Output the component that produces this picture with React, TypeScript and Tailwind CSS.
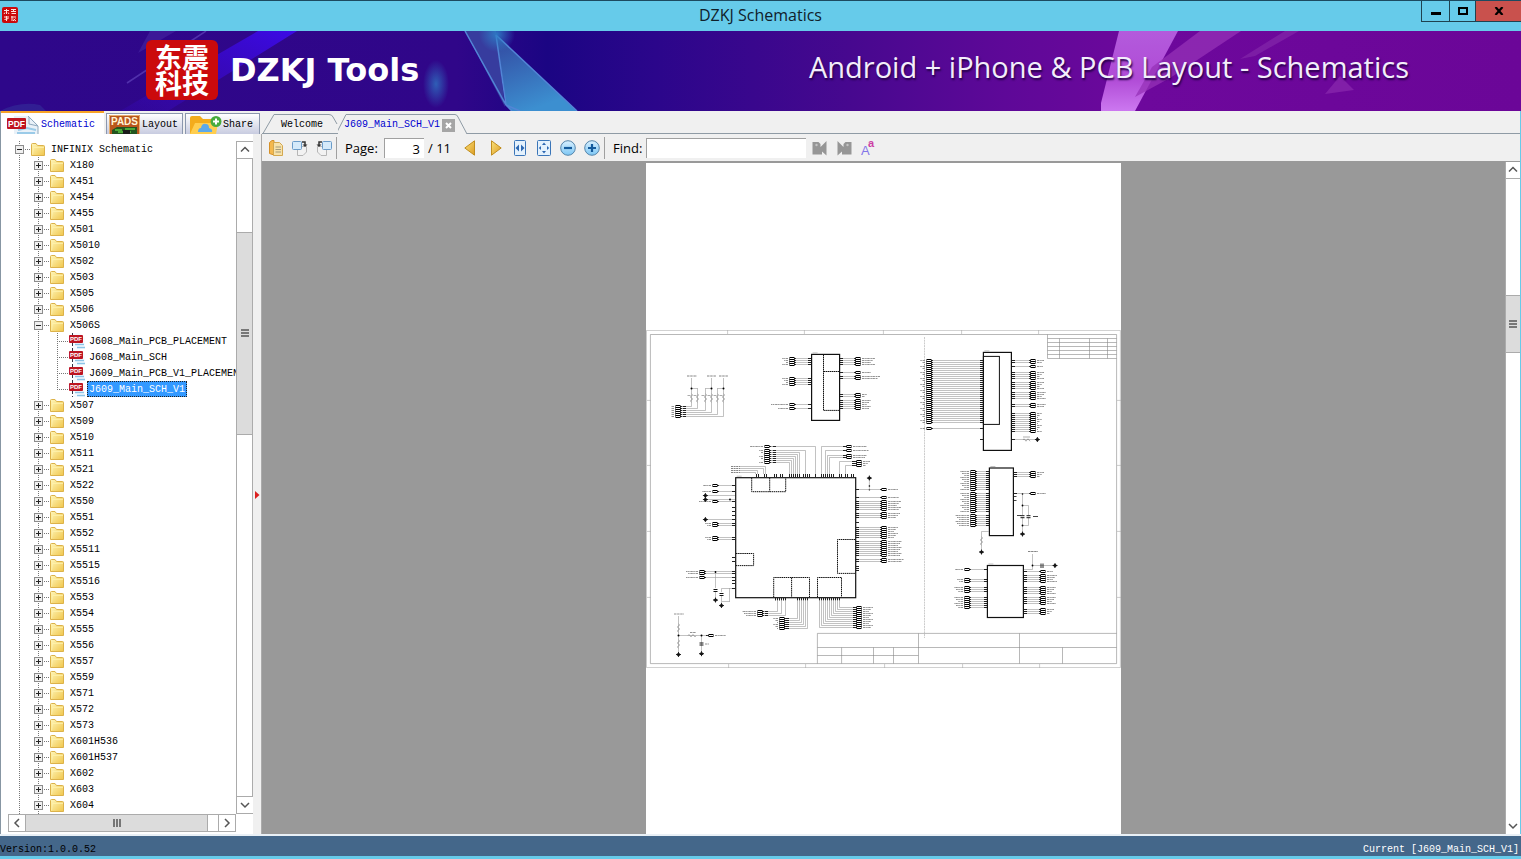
import type { ReactNode } from "react";

type TreeItem = {
  label: string;
  level: 0 | 1 | 2;
  open?: boolean;
  last?: boolean;
  selected?: boolean;
};

const folder = (label: string): TreeItem => ({ label, level: 1 });

const dataTree: TreeItem[] = [
  { label: "INFINIX Schematic", level: 0, open: true },
  ...["X180", "X451", "X454", "X455", "X501", "X5010", "X502", "X503", "X505", "X506"].map(folder),
  { label: "X506S", level: 1, open: true },
  { label: "J608_Main_PCB_PLACEMENT", level: 2 },
  { label: "J608_Main_SCH", level: 2 },
  { label: "J609_Main_PCB_V1_PLACEMENT", level: 2 },
  { label: "J609_Main_SCH_V1", level: 2, selected: true, last: true },
  ...[
    "X507", "X509", "X510", "X511", "X521", "X522", "X550", "X551", "X552",
    "X5511", "X5515", "X5516", "X553", "X554", "X555", "X556", "X557", "X559",
    "X571", "X572", "X573", "X601H536", "X601H537", "X602", "X603", "X604", "X605",
  ].map(folder),
];

/* ---------- icons ---------- */

const IconFolder = () => (
  <svg width="14" height="13" viewBox="0 0 14 13">
    <defs>
      <linearGradient id="folder" x1="0" y1="0" x2="1" y2="1">
        <stop offset="0" stopColor="#fff7bb" />
        <stop offset="1" stopColor="#f0c64c" />
      </linearGradient>
    </defs>
    <path d="M.5 1.5Q.5.5 1.5.5H5L6.5 2.5H12.5Q13.5 2.5 13.5 3.5V12.5H.5Z" fill="url(#folder)" stroke="#dcb24a" />
    <path d="M1.5 11.5L2.5 4.5H13" fill="none" stroke="#fff3b0" opacity=".7" />
  </svg>
);

const IconPdfSmall = () => (
  <svg width="17" height="16" viewBox="0 0 17 16">
    <path d="M4 0H11L16 5V16H4Z" fill="#f7fbff" />
    <path d="M3.5 0V16" stroke="#334" strokeDasharray="3 2" />
    <path d="M6 11.5H15M8 14.5H16" stroke="#8cc4e6" strokeWidth="1.5" />
    <rect x="0" y="2" width="14" height="8" rx="1" fill="#bd1522" />
    <text x="7" y="8" fontSize="6" fontWeight="700" textAnchor="middle" fill="#fff" fontFamily="Liberation Sans, sans-serif">PDF</text>
  </svg>
);

const IconPdf = () => (
  <svg width="32" height="20" viewBox="0 0 32 20">
    <path d="M7 1H22L31 10V20H7Z" fill="#e9f1f8" />
    <path d="M21 1L31 11V20M22 2V9L31 11" fill="none" stroke="#8fa9be" />
    <path d="M11 15L20 13L29 15M10 18H28" stroke="#9bcbe8" strokeWidth="2" fill="none" />
    <rect x="0" y="3" width="19" height="11" rx="1" fill="#c01420" />
    <text x="9.5" y="12" fontSize="8.5" fontWeight="700" textAnchor="middle" fill="#fff" fontFamily="Liberation Sans, sans-serif">PDF</text>
  </svg>
);

const IconPads = () => (
  <svg width="31" height="19" viewBox="0 0 31 19">
    <rect width="31" height="19" fill="#b9561c" />
    <path d="M.5 19V.5H30.5V19" fill="none" stroke="#e6b070" />
    <text x="15.5" y="10" fontSize="10" fontWeight="700" textAnchor="middle" fill="#fff4d6" fontFamily="Liberation Sans, sans-serif">PADS</text>
    <path d="M3 19V15L8 12H28V19Z" fill="#23551f" />
    <path d="M6 15H13M16 14H26M9 17H22" stroke="#59c540" strokeWidth="1.5" />
    <rect x="14" y="15" width="7" height="4" fill="#1a1a1a" />
  </svg>
);

const IconShare = () => (
  <svg width="32" height="19" viewBox="0 0 32 19">
    <path d="M0 3Q0 1 2 1H10L13 4H22Q24 4 24 6V19H0Z" fill="#f3ac1c" />
    <path d="M0 19L5 8H28L26 19Z" fill="#ffce4f" />
    <path d="M8 17Q8 13 11 13Q12 8 16 9Q19 9 19 13Q23 14 22 17Z" fill="#5da9ea" />
    <circle cx="26" cy="6.500" r="5.500" fill="#47ab3d" />
    <path d="M26 3.500V9.500M23 6.500H29" stroke="#fff" strokeWidth="2" />
  </svg>
);

const IconCopy = () => (
  <svg width="16" height="16" viewBox="0 0 16 16">
    <path d="M1.500 2.500L4 .5H6V15L1.500 13.500Z" fill="#f5b94e" stroke="#d59028" />
    <path d="M5.500 2.500H11.500L14.500 5.500V15.500H5.500Z" fill="#f7e2aa" stroke="#d3a850" />
    <path d="M7.500 7H13M7.500 9.500H13M7.500 12H13" stroke="#a39a7a" />
  </svg>
);

const IconRotate = ({ left }: { left?: boolean }) => (
  <svg width="18" height="16" viewBox="0 0 18 16">
    <g transform={left ? "translate(18 0) scale(-1 1)" : undefined}>
      <path d="M6.500 6.500H15.500V12L12 15.500H6.500Z" fill="#f2f2f2" stroke="#b6b6b6" />
      <rect x="1.500" y="1.500" width="9" height="8" rx="1" fill="#d5eafa" stroke="#6b9cc9" />
      <path d="M11 2H14V5" fill="none" stroke="#333" strokeWidth="1.500" />
      <path d="M11.500 4.500H16.500L14 7Z" fill="#333" />
    </g>
  </svg>
);

const IconTriangle = ({ left }: { left?: boolean }) => (
  <svg width="12" height="16" viewBox="0 0 12 16">
    <defs>
      <linearGradient id="gold" x1="0" y1="0" x2="1" y2="1">
        <stop offset="0" stopColor="#fbe27a" />
        <stop offset="1" stopColor="#dc9c24" />
      </linearGradient>
    </defs>
    <path d={left ? "M10.500 .8V15.200L.8 8Z" : "M1.500 .8V15.200L11.200 8Z"} fill="url(#gold)" stroke="#c08e20" />
  </svg>
);

const IconFit = ({ page }: { page?: boolean }) => (
  <svg width="14" height="16" viewBox="0 0 14 16">
    <rect x={page ? 0.5 : 1.5} y=".5" width={page ? 13 : 11} height="15" rx="1" fill="#e4f1fc" stroke="#3a75b8" />
    {page ? (
      <path d="M7 2.500L9 5H5ZM7 13.500L9 11H5ZM1.800 8L4 6V10ZM12.200 8L10 6V10Z" fill="#2d68b2" />
    ) : (
      <path d="M2.500 8L6 4.500V11.500ZM11.500 8L8 4.500V11.500Z" fill="#2d68b2" />
    )}
  </svg>
);

const IconZoom = ({ plus }: { plus?: boolean }) => (
  <svg width="16" height="16" viewBox="0 0 16 16">
    <defs>
      <linearGradient id="glass" x1="0" y1="0" x2="0" y2="1">
        <stop offset="0" stopColor="#d9f0ff" />
        <stop offset="1" stopColor="#7cc6f4" />
      </linearGradient>
    </defs>
    <circle cx="8" cy="8" r="7.300" fill="url(#glass)" stroke="#5686ab" />
    <path d={plus ? "M4 8H12M8 4V12" : "M4 8H12"} stroke="#145a9c" strokeWidth="2.200" />
  </svg>
);

const IconFind = ({ next }: { next?: boolean }) => (
  <svg width="16" height="16" viewBox="0 0 16 16">
    <path
      d="M.5 2H6.500L8.500 4V7L14.500 1V15.500L10 11.500V14.500H.5Z"
      fill="#969696"
      transform={next ? "translate(16 0) scale(-1 1)" : undefined}
    />
    <circle cx={next ? 11.5 : 4.5} cy="5" r="1.200" fill="#c4c4c4" />
  </svg>
);

const IconCase = () => (
  <svg width="14" height="16" viewBox="0 0 14 16">
    <text x="0" y="15" fontSize="13" fill="#8375e8" fontFamily="Liberation Sans, sans-serif">A</text>
    <text x="7" y="7" fontSize="11" fontWeight="700" fill="#cc3fa4" fontFamily="Liberation Sans, sans-serif">a</text>
  </svg>
);

/* ---------- window header ---------- */

const LogoMark = () => (
  <div className="flex h-[60px] w-[72px] flex-col items-center justify-center rounded-md bg-[#cb0a0c] font-['Noto_Sans_CJK_SC',sans-serif] text-[27px] leading-[26px] font-bold text-white">
    <span>东震</span>
    <span>科技</span>
  </div>
);

const IconApp = () => (
  <svg width="16" height="16" viewBox="0 0 16 16">
    <rect width="16" height="16" rx="2" fill="#cb0a0c" />
    <path
      d="M2 3.500H7M4.500 2V7M3 5.500L2 7M6 5.500L7 7M9 2.500H14M11.500 2V5M9 4.500H14M9.500 6.500H14M2 10H7M4.500 9V14M2.500 12.500L6.500 11.500M9 10H14M10 9V14M11.500 12L14 14M13.500 11.500L11 14"
      fill="none"
      stroke="#ffe3dc"
    />
  </svg>
);

const TitleBar = () => (
  <header className="relative flex h-[31px] shrink-0 items-start justify-between border-t border-[#1c4a60] bg-[#66cbea]">
    <div className="flex h-7 items-center pl-0.5">
      <IconApp />
    </div>
    <h1 className="absolute inset-x-0 text-center font-['Open_Sans',sans-serif] text-[16px] leading-7 text-[#10202a]">
      DZKJ Schematics
    </h1>
    <div className="relative flex h-[21px] border-b border-l border-[#1f4250]">
      <button aria-label="Minimize" className="flex w-7 items-center justify-center border-r border-[#1f4250]">
        <span className="mt-1 h-[3px] w-2.5 bg-black" />
      </button>
      <button aria-label="Maximize" className="flex w-[26px] items-center justify-center border-r border-[#1f4250]">
        <span className="h-2 w-2.5 border-2 border-black" />
      </button>
      <button aria-label="Close" className="flex w-[45px] items-center justify-center bg-[#c9514d]">
        <svg width="10" height="8" viewBox="0 0 10 8">
          <path d="M1.500 0L8.500 8M8.500 0L1.500 8" stroke="#000" strokeWidth="2.200" />
        </svg>
      </button>
    </div>
  </header>
);

const BannerArt = () => (
  <svg className="absolute inset-0 h-full w-full" viewBox="0 0 1521 80" preserveAspectRatio="none">
    <defs>
      <linearGradient id="sky">
        <stop offset="0" stopColor="#2e078a" />
        <stop offset=".3" stopColor="#300689" />
        <stop offset=".36" stopColor="#1b0583" />
        <stop offset=".43" stopColor="#2b068b" />
        <stop offset=".56" stopColor="#47088f" />
        <stop offset=".66" stopColor="#5e0898" />
        <stop offset=".75" stopColor="#6d089c" />
        <stop offset="1" stopColor="#6b0698" />
      </linearGradient>
      <linearGradient id="crystal" x1="0" y1="0" x2=".4" y2="1">
        <stop offset="0" stopColor="#32469f" />
        <stop offset="1" stopColor="#3c8fd0" />
      </linearGradient>
      <linearGradient id="ray" x1="1" y1="0" x2="0" y2="1">
        <stop offset="0" stopColor="#3c0ae6" />
        <stop offset="1" stopColor="#3a09c8" stopOpacity=".2" />
      </linearGradient>
      <linearGradient id="pink" x1="0" y1="0" x2="0" y2="1">
        <stop offset="0" stopColor="#b35bdc" />
        <stop offset=".6" stopColor="#b04bd6" />
        <stop offset="1" stopColor="#cc78f0" />
      </linearGradient>
      <radialGradient id="glow">
        <stop offset="0" stopColor="#2e80c8" stopOpacity=".9" />
        <stop offset="1" stopColor="#2e80c8" stopOpacity="0" />
      </radialGradient>
    </defs>
    <rect width="1521" height="80" fill="url(#sky)" />
    <path d="M258 0H297L168 80H120Z" fill="url(#ray)" />
    <path d="M150 0H176L138 22Z" fill="#4a2ba6" opacity=".5" />
    <path d="M206 0L127 52" stroke="#5a3bb5" strokeWidth="1.500" opacity=".8" />
    <path d="M0 80Q20 70 40 74L46 80Z" fill="#37409f" opacity=".4" />
    <ellipse cx="436" cy="53" rx="13" ry="24" fill="url(#glow)" opacity=".8" />
    <path d="M465 0H496L505 76Z" fill="#373c9e" />
    <path d="M496 4L577 80H511L506 74Z" fill="url(#crystal)" />
    <path d="M465 0L506 74L512 80M496 4L506 74M496 4L577 80M506 74L520 80" stroke="#5285d6" strokeWidth="1.500" fill="none" />
    <circle cx="497" cy="3" r="18" fill="url(#glow)" />
    <path d="M1119 0H1178L1135 80H1101V72Z" fill="url(#pink)" />
    <path d="M1200 0H1241L1170 47L1135 66L1152 36Z" fill="#9632b7" opacity=".75" />
    <path d="M1285 0H1299L1255 25L1240 28Z" fill="#8327aa" opacity=".7" />
    <path d="M1340 45L1354 59L1325 63Z" fill="#8a2aae" opacity=".7" />
  </svg>
);

const Banner = () => (
  <div className="relative flex h-20 shrink-0 items-center justify-between overflow-hidden pr-28 pb-0.5 pl-[146px] text-white">
    <BannerArt />
    <div className="relative flex items-center gap-3">
      <LogoMark />
      <strong className="font-['DejaVu_Sans',sans-serif] text-[32px] leading-10 font-bold">DZKJ Tools</strong>
    </div>
    <p className="relative pb-1.5 font-['Open_Sans',sans-serif] text-[29px] leading-8 text-[#f3eefb] [text-shadow:1px_2px_2px_#26004a]">
      Android + iPhone &amp; PCB Layout - Schematics
    </p>
  </div>
);

/* ---------- scroll bars ---------- */

type Direction = "up" | "down" | "left" | "right";

const arrows: Record<Direction, string> = {
  up: "M1 6.500L5 2.500L9 6.500",
  down: "M1 3L5 7L9 3",
  left: "M7 1L3 5L7 9",
  right: "M3 1L7 5L3 9",
};

const ScrollButton = ({ to }: { to: Direction }) => (
  <button aria-label={`Scroll ${to}`} className="flex size-4 shrink-0 items-center justify-center bg-white">
    <svg width="10" height="10" viewBox="0 0 10 10">
      <path d={arrows[to]} fill="none" stroke="#555" strokeWidth="1.500" />
    </svg>
  </button>
);

const Grip = () => (
  <svg width="8" height="8" viewBox="0 0 8 8">
    <path d="M0 1H8M0 4H8M0 7H8" stroke="#555" strokeWidth="1.500" />
  </svg>
);

/* ---------- left pane ---------- */

const Guide = ({ item, cell }: { item: TreeItem; cell: number }) => {
  const own = cell === item.level;
  const endsHere = own && item.last;
  return (
    <svg className="shrink-0 overflow-visible" width="19" height="16" viewBox="0 0 19 16">
      <path d={endsHere ? "M9.500 0V8" : "M9.500 0V16"} stroke="#777" strokeDasharray="1 1" />
      {own && <path d="M9 8.500H20" stroke="#777" strokeDasharray="1 1" />}
      {own && cell < 2 && (
        <>
          <rect x="5.500" y="4.500" width="8" height="8" fill="#f0f0f0" stroke="#8c8c8c" />
          <path d={item.open ? "M7 8.500H12" : "M7 8.500H12M9.500 6V11"} stroke="#222" />
        </>
      )}
    </svg>
  );
};

const TreeRow = ({ item }: { item: TreeItem }) => (
  <li role="treeitem" aria-selected={!!item.selected} className="flex h-4 items-center pl-[9px] whitespace-nowrap">
    {Array.from({ length: item.level + 1 }, (_, cell) => (
      <Guide key={cell} item={item} cell={cell} />
    ))}
    <span className="flex w-5 shrink-0 pl-0.5">{item.level === 2 ? <IconPdfSmall /> : <IconFolder />}</span>
    <button
      className={
        item.selected
          ? "h-4 bg-[#3399ff] px-0.5 pt-0.5 leading-[14px] text-white outline-1 -outline-offset-1 outline-dotted outline-[#222]"
          : "h-4 px-0.5 pt-0.5 leading-[14px]"
      }
    >
      {item.label}
    </button>
  </li>
);

const Sidebar = () => (
  <aside className="flex w-[262px] shrink-0 flex-col border-l border-[#8796a3] bg-[#f0f0f0]">
    <div role="tablist" className="flex h-[23px] items-end gap-0.5 text-[10px]">
      <button role="tab" aria-selected className="flex h-full w-[103px] items-center gap-0.5 border-t-2 border-[#f8a326] bg-white pt-0.5 pl-1.5 text-[#0000d0]">
        <IconPdf />
        Schematic
      </button>
      <button role="tab" aria-selected={false} className="flex h-[21px] w-[77px] items-end gap-0.5 border border-b-0 border-[#8b97ad] bg-linear-to-b from-white to-[#c8cce0] pl-0.5">
        <IconPads />
        <span className="leading-[18px]">Layout</span>
      </button>
      <button role="tab" aria-selected={false} className="flex h-[21px] w-[75px] items-end gap-px border border-b-0 border-[#8b97ad] bg-linear-to-b from-white to-[#c8cce0] pl-1">
        <IconShare />
        <span className="leading-[18px]">Share</span>
      </button>
    </div>
    <div className="flex min-h-0 flex-1">
      <div className="flex min-w-0 flex-1 flex-col bg-white pt-[7px] pb-0.5">
        <div className="flex min-h-0 flex-1">
          <ul role="tree" className="min-w-0 flex-1 overflow-hidden text-[10px]">
            {dataTree.map((item) => (
              <TreeRow key={item.label} item={item} />
            ))}
          </ul>
          <div className="flex w-[17px] shrink-0 flex-col border border-[#ababab] bg-white">
            <ScrollButton to="up" />
            <div className="flex-[73] border-t border-[#ababab]" />
            <div className="flex flex-[203] items-center justify-center border-y border-[#ababab] bg-[#dcdcdc]">
              <Grip />
            </div>
            <div className="flex-[363] border-b border-[#ababab]" />
            <ScrollButton to="down" />
          </div>
        </div>
        <div className="mr-[17px] ml-[7px] flex h-[18px] shrink-0 border border-[#ababab]">
          <ScrollButton to="left" />
          <div className="flex flex-[185] items-center justify-center border-x border-[#ababab] bg-[#dcdcdc]">
            <span className="rotate-90">
              <Grip />
            </span>
          </div>
          <div className="flex-[10] border-r border-[#ababab]" />
          <ScrollButton to="right" />
        </div>
      </div>
      <div className="flex w-[9px] shrink-0 flex-col border-r border-[#ababab] pl-px">
        <span className="flex-[360]" />
        <svg width="6" height="8" viewBox="0 0 6 8">
          <path d="M1 0L5.500 4L1 8Z" fill="#dc2020" />
        </svg>
        <span className="flex-[337]" />
      </div>
    </div>
  </aside>
);

/* ---------- schematic drawing ---------- */

type BusProps = {
  from: number;
  port: number;
  y: number;
  n?: number;
  text?: number;
};

// n parallel wires from a chip edge to a column of ports with net names behind
const Bus = ({ from, port, y, n = 1, text = 12 }: BusProps) => {
  const side = port > from ? 1 : -1;
  const first = Math.floor(y) + 0.5;
  return (
    <g>
      {Array.from({ length: n }, (_, i) => {
        const top = first + i * 2;
        return (
          <g key={i}>
            <path d={`M${from} ${top}H${port}`} stroke="#999" strokeWidth=".6" />
            <path d={`M${from} ${top}h${side * 3}`} stroke="#222" strokeWidth="1" />
            <path d={`M${port - side * 4} ${top}h${side * 2}`} stroke="#333" strokeWidth="1" />
            <rect x={port - 2} y={top - 1} width="4" height="2" fill="#fff" stroke="#000" strokeWidth="1" />
            <path
              d={`M${port + side * 4} ${top}h${side * (text - (i % 3) * 2)}`}
              stroke="#777"
              strokeWidth=".8"
              strokeDasharray="2.500 .7 1.500 .5"
            />
          </g>
        );
      })}
    </g>
  );
};

const Chip = ({ x, y, w, h }: { x: number; y: number; w: number; h: number }) => (
  <>
    <rect x={x} y={y} width={w} height={h} fill="none" stroke="#111" strokeWidth="1.200" />
    <path d={`M${x + 1} ${y - 1.5}h5`} stroke="#999" strokeWidth=".6" />
  </>
);

const Ground = ({ x, y }: { x: number; y: number }) => (
  <path d={`M${x} ${y - 1.5}l1.800 1.500l-1.800 1.800l-1.800 -1.800ZM${x} ${y - 2.5}v5M${x - 2.5} ${y}h5`} fill="#111" stroke="#111" strokeWidth=".8" />
);

const Cap = ({ x, y }: { x: number; y: number }) => (
  <path d={`M${x - 2} ${y - 1}h4M${x - 2} ${y + 1}h4`} stroke="#111" strokeWidth="1" />
);

const Resistor = ({ x, y }: { x: number; y: number }) => (
  <path d={`M${x} ${y - 4}l1.200 1l-2.400 2l2.400 2l-2.400 2l1.200 1`} fill="none" stroke="#777" strokeWidth=".6" />
);

const Pins = ({ xs, y }: { xs: number[]; y: number }) => (
  <path d={xs.map((x) => `M${x + 0.5} ${y}v3`).join("")} stroke="#222" strokeWidth="1" />
);

const Wires = ({ d }: { d: string }) => <path d={d} fill="none" stroke="#999" strokeWidth=".6" />;

const steps = (start: number, n: number, step = 2) => Array.from({ length: n }, (_, i) => start + i * step);

const SheetFrame = () => (
  <g fill="none" stroke="#aaa" strokeWidth=".6">
    <path d="M646.500 330.400H1120.400V667.600H646.500Z" />
    <path d="M650.400 334.500H1116.600V663.600H650.400Z" stroke="#888" />
    <path d="M727.600 330v4M804.400 330v4M883.400 330v4M961.600 330v4M1038.600 330v4" />
    <path d="M728.600 664v4M805.600 664v4M884.600 664v4M962.600 664v4M1039.600 664v4" />
    <path d="M647 400.400h4M647 465.400h4M647 531.400h4M647 597.400h4" />
    <path d="M1117 400.400h4M1117 465.400h4M1117 531.400h4M1117 597.400h4" />
    <path d="M817.400 663.600V633.400H1116.600M817.400 647.500H1116.600M817.400 655.500H918.400" stroke="#888" />
    <path d="M841.600 647.500V663.600M873.500 647.500V663.600M893.500 647.500V663.600M918.500 633.400V663.600M1019.500 633.400V663.600M1062.500 647.500V663.600" stroke="#888" />
    <path d="M1047.500 334.500V358.500H1116.600M1047.500 338.500H1116.600M1047.500 342.500H1116.600M1047.500 346.500H1116.600M1047.500 350.500H1116.600M1047.500 354.500H1116.600" stroke="#888" />
    <path d="M1059.500 338.500V358.500M1089.500 338.500V358.500M1107.500 338.500V358.500" stroke="#888" />
    <path d="M924.500 337V638" strokeDasharray="2 .7" />
  </g>
);

const PullUps = () => {
  const xs = [691.5, 697.5, 705.5, 711.5, 717.5, 723.5];
  return (
    <g>
      <path d="M687 376h10M707 376h9M719 376h9" stroke="#777" strokeWidth=".9" strokeDasharray="2.500 .7" />
      <Wires d="M691.500 378V388.500H697.500M711.500 378V388.500H705.500M723.500 378V388.500H717.500" />
      <Wires d={xs.map((x, i) => `M${x} 388V${406.5 + i * 2}H680`).join("")} />
      {xs.map((x, i) => (
        <g key={x}>
          <Resistor x={x} y={398} />
          <path d={`M${x - 4} 395.500h3`} stroke="#888" strokeWidth=".7" />
          <Bus from={686} port={678} y={406 + i * 2} text={3} />
        </g>
      ))}
      <circle cx="691.500" cy="388.500" r="1" />
      <circle cx="711.500" cy="388.500" r="1" />
      <circle cx="723.500" cy="388.500" r="1" />
    </g>
  );
};

const MainChip = () => (
  <g>
    <Chip x={735.7} y={477.7} w={120} h={120} />
    <g fill="none" stroke="#111" strokeWidth="1" strokeDasharray="1.500 .6">
      <path d="M751.700 478V491.700H785.700V478M769.700 478V491.700" />
      <path d="M855 539.500H837.500V573.400H855" />
      <path d="M736 553.500H753.600V565.600H736" />
      <path d="M773.700 597V577.500H809.500V597M791.600 577.500V597" />
      <path d="M817.500 597V577.500H841.500V597" />
    </g>

    <Pins y={474} xs={[756, 758, 764, 766, 774, 776, 780, 782, ...steps(789, 6), ...steps(803, 4), 815, ...steps(821, 7), 839, 841, 845, 847, 851, 853]} />
    <Wires d="M770 446.500H815.500V474M740 466.500H765.500V474M740 468.500H763.500V474M740 470.500H757.500V474M740 472.500H755.500V474" />
    <Wires d={[805.5, 799.5, 797.5, 795.5, 793.5, 791.5, 789.5].map((x, i) => `M770 ${450.5 + i * 2}H${x}V474`).join("")} />
    <path d="M731 466.500h9M731 468.500h9M731 470.500h9M731 472.500h9" stroke="#777" strokeWidth=".9" strokeDasharray="2 .6" />
    <Bus from={776} port={767} y={446} text={13} />
    <Bus from={776} port={767} y={450} n={7} text={4} />
    <Wires d="M845 446.500H821.500V474M845 450.500H825.500V474M845 455.500H827.500V474M845 457.500H829.500V474M856 461.500H839.500V474M856 465.500H845.500V474" />
    <Bus from={843} port={849} y={446} text={14} />
    <Bus from={843} port={849} y={450} text={16} />
    <Bus from={843} port={849} y={455} n={2} text={14} />
    <Bus from={852} port={859} y={461} n={3} text={7} />

    <Wires d="M869.400 477V489.700" />
    <Ground x={869.4} y={478} />
    <circle cx="869.400" cy="486" r=".8" />
    <circle cx="869.400" cy="489.700" r=".8" />
    <Bus from={856} port={884} y={489} text={10} />
    <Bus from={856} port={884} y={497} text={11} />
    <Bus from={856} port={884} y={501} n={5} text={13} />
    <Bus from={856} port={884} y={513} n={3} text={12} />
    <Bus from={856} port={884} y={527} n={6} text={10} />
    <Bus from={856} port={884} y={541} n={8} text={14} />
    <Bus from={856} port={884} y={559} n={2} text={16} />
    <path d="M856 522.500h3M856 566.500h3M856 568.500h3M856 570.500h3" stroke="#222" />

    <Bus from={735} port={715} y={485} text={8} />
    <Bus from={735} port={715} y={491} text={9} />
    <Bus from={735} port={715} y={501} text={12} />
    <Bus from={735} port={715} y={523} n={2} text={6} />
    <Bus from={735} port={715} y={537} n={2} text={6} />
    <Bus from={735} port={702} y={571} n={2} text={12} />
    <Bus from={735} port={702} y={577} text={12} />
    <Wires d="M705 495.500H735M705 499.500H735M705 519.500H735M715.500 572V588M715.500 592V600M735 588.500H721.500V592M721.500 596V605M729.500 601.500H722M729.500 602V588" />
    <path d="M732 507.500h3M732 511.500h3M732 515.500h3M732 519.500h3M732 557.500h3M732 561.500h3M732 580.500h3M732 583.500h3M732 588.500h3" stroke="#222" />
    <Ground x={705.4} y={495.5} />
    <Ground x={705.4} y={499.5} />
    <Ground x={705.4} y={519.5} />
    <Cap x={715.5} y={590.5} />
    <Cap x={721.5} y={594.5} />
    <Ground x={715.5} y={600} />
    <Ground x={721.5} y={605.5} />
    <circle cx="730" cy="499.500" r=".9" />
    <circle cx="715.500" cy="572" r=".9" />

    <Pins y={597.5} xs={[...steps(775, 6), ...steps(797, 6), ...steps(819, 11)]} />
    <Wires d="M777.500 600V611.500H764M781.500 600V613.500H764M785.500 600V615.500H764" />
    <Wires d={steps(0, 6, 1).map((i) => `M${797.5 + i * 2} 600V${618.5 + i * 2}H786`).join("")} />
    <Wires d={steps(0, 11, 1).map((i) => `M${839.5 - i * 2} 600V${607.5 + i * 2}H857`).join("")} />
    <Bus from={768} port={760} y={611} n={3} text={14} />
    <Bus from={789} port={782} y={618} n={6} text={5} />
    <Bus from={853} port={859} y={607} n={11} text={10} />
  </g>
);

const Divider = () => (
  <g>
    <path d="M674 614h10M690 632.500h6M705 644h4" stroke="#777" strokeWidth=".8" strokeDasharray="2.500 .6" />
    <Wires d="M678.500 616V654M679 635.500H709M701.500 635.500V653" />
    <Resistor x={678.5} y={628} />
    <Resistor x={678.5} y={644} />
    <path d="M688 635.700l1 -1.200l2 2.400l2 -2.400l2 2.400l1 -1.200" fill="none" stroke="#777" strokeWidth=".6" />
    <Bus from={706} port={711} y={635} text={11} />
    <circle cx="678.500" cy="635.500" r="1" />
    <circle cx="701.500" cy="635.500" r="1" />
    <Cap x={701.5} y={644} />
    <Ground x={678.5} y={654.5} />
    <Ground x={701.5} y={653.7} />
  </g>
);

const Schematic = () => (
  <svg className="w-full" viewBox="646 330 475 338" role="img" aria-label="J609 main schematic, page 3">
    <SheetFrame />
    <PullUps />

    <Chip x={811.6} y={354.4} w={28} h={66} />
    <path d="M823.500 355V410.400H839M823.500 371.500H839" fill="none" stroke="#111" strokeDasharray="1.500 .5" />
    <Bus from={811} port={792} y={358} n={4} text={6} />
    <Bus from={811} port={792} y={378} n={4} text={6} />
    <Bus from={811} port={792} y={404} text={17} />
    <Bus from={811} port={792} y={408} text={10} />
    <Bus from={840} port={858} y={358} n={4} text={13} />
    <Bus from={840} port={858} y={372} text={9} />
    <Bus from={840} port={858} y={376} n={2} text={18} />
    <Bus from={840} port={858} y={394} n={2} text={5} />
    <Bus from={840} port={858} y={400} n={5} text={9} />

    <MainChip />
    <Divider />

    <Chip x={983.4} y={352.4} w={28} h={98} />
    <rect x="983.400" y="356.400" width="16" height="68" fill="none" stroke="#111" />
    <Bus from={983} port={929} y={360} n={32} text={5} />
    <Bus from={983} port={929} y={428} text={5} />
    <Bus from={1012} port={1033} y={360} n={2} text={7} />
    <Bus from={1012} port={1033} y={366} text={6} />
    <Bus from={1012} port={1033} y={372} n={4} text={7} />
    <Bus from={1012} port={1033} y={382} n={4} text={7} />
    <Bus from={1012} port={1033} y={392} n={4} text={9} />
    <Bus from={1012} port={1033} y={404} n={2} text={9} />
    <Bus from={1012} port={1033} y={413} n={10} text={5} />
    <Wires d="M1012 439.500H1037" />
    <path d="M980 439.500h3M1012 439.500h3" stroke="#222" />
    <path d="M1023 440l1 -1.200l2 2.400l2 -2.400l2 2.400M1023 437h7" fill="none" stroke="#777" strokeWidth=".6" />
    <Ground x={1037.4} y={439.5} />

    <Chip x={989.4} y={468} w={24} h={67.6} />
    <Bus from={989} port={973} y={471} n={10} text={9} />
    <Bus from={989} port={973} y={493} n={10} text={9} />
    <Bus from={989} port={973} y={515} n={6} text={14} />
    <Bus from={1014} port={1033} y={472} n={3} text={7} />
    <Bus from={1014} port={1033} y={493} text={9} />
    <Wires d="M1022.500 494V515M1022.500 505.500H1028.500V515M1022.500 518V534M1028.500 518V525.500H1023M989 531.500H981.500V552" />
    <path d="M1014 496.500h2.500M1014 500.500h2.500M1017 515.500h4M1033 516.500h5" stroke="#444" />
    <Cap x={1022.5} y={516.7} />
    <Cap x={1028.5} y={516.7} />
    <circle cx="1022.500" cy="505.500" r=".9" />
    <circle cx="1022.500" cy="494" r=".8" />
    <circle cx="1022.500" cy="525.500" r=".9" />
    <Ground x={1022.5} y={534} />
    <Resistor x={981.5} y={541} />
    <Ground x={981.5} y={552} />

    <Chip x={987.4} y={565.5} w={36} h={52} />
    <Bus from={987} port={967} y={569} text={8} />
    <Bus from={987} port={967} y={579} n={2} text={6} />
    <Bus from={987} port={967} y={587} n={3} text={9} />
    <Bus from={987} port={967} y={597} n={6} text={9} />
    <Bus from={1024} port={1043} y={571} text={6} />
    <Bus from={1024} port={1043} y={575} n={4} text={10} />
    <Bus from={1024} port={1043} y={587} n={4} text={9} />
    <Bus from={1024} port={1043} y={597} n={4} text={9} />
    <Bus from={1024} port={1043} y={609} n={3} text={7} />
    <path d="M1028 551.500h10" stroke="#777" strokeWidth=".9" strokeDasharray="2.500 .6" />
    <Wires d="M1032.500 554V569.500H1024M1033 565.500H1055" />
    <path d="M1041 563.500v4.500M1043 563.500v4.500" stroke="#222" />
    <circle cx="1032.500" cy="565.500" r=".9" />
    <Ground x={1055} y={565.5} />
  </svg>
);

/* ---------- right pane ---------- */

const DocumentTabs = () => (
  <div role="tablist" className="flex h-[23px] shrink-0 border-b border-[#8f9ba5] text-[10px]">
    <button role="tab" aria-selected={false} className="relative flex h-[23px] w-[76px] items-end justify-center pl-1">
      <svg className="absolute top-0 left-0" width="76" height="23" viewBox="0 0 76 23">
        <path d="M1 22.500L12 3.500H67Q70 3.500 71 6L75 13" fill="none" stroke="#8f9ba5" />
      </svg>
      <span className="relative leading-[18px]">Welcome</span>
    </button>
    <button role="tab" aria-selected className="relative flex h-[23px] w-[130px] items-end gap-0.5 pl-1.5 text-[#0000d0]">
      <svg className="absolute top-0 left-0" width="130" height="23" viewBox="0 0 130 23">
        <path d="M-2 23L8 3.500H117Q119 3.500 120 6L129 23Z" fill="#f0f0f0" />
        <path d="M-2 23L8 3.500H117Q119 3.500 120 6L129 23" fill="none" stroke="#8f9ba5" />
      </svg>
      <span className="relative leading-[18px]">J609_Main_SCH_V1</span>
      <svg className="relative mb-0.5" width="13" height="13" viewBox="0 0 13 13">
        <rect width="13" height="13" fill="#a5a5a5" />
        <path d="M4 4L9 9M9 4L4 9" stroke="#fff" strokeWidth="2" />
      </svg>
    </button>
  </div>
);

const ToolButton = ({ label, children }: { label: string; children: ReactNode }) => (
  <button aria-label={label} className="flex w-6 shrink-0 items-center justify-center">
    {children}
  </button>
);

const Separator = () => <span className="h-[22px] w-px shrink-0 bg-[#a0a0a0]" />;

const Toolbar = () => (
  <div className="flex h-7 shrink-0 items-center border-b border-[#999] pl-0.5 font-['Open_Sans',sans-serif] text-[13px] text-black">
    <ToolButton label="Copy"><IconCopy /></ToolButton>
    <ToolButton label="Rotate right"><IconRotate /></ToolButton>
    <ToolButton label="Rotate left"><IconRotate left /></ToolButton>
    <Separator />
    <label htmlFor="page" className="w-[47px] pt-0.5 pl-2">Page:</label>
    <input
      id="page"
      defaultValue="3"
      className="h-5 w-10 border-t border-l border-[#a0a0a0] bg-white pt-0.5 pr-1 text-right outline-none"
    />
    <span className="w-[34px] pt-0.5 pl-1 whitespace-nowrap">/ 11</span>
    <ToolButton label="Previous page"><IconTriangle left /></ToolButton>
    <span className="w-0.5" />
    <ToolButton label="Next page"><IconTriangle /></ToolButton>
    <ToolButton label="Fit width"><IconFit /></ToolButton>
    <ToolButton label="Fit page"><IconFit page /></ToolButton>
    <ToolButton label="Zoom out"><IconZoom /></ToolButton>
    <ToolButton label="Zoom in"><IconZoom plus /></ToolButton>
    <Separator />
    <label htmlFor="find" className="w-[41px] pt-0.5 pl-2">Find:</label>
    <input id="find" className="mr-0.5 h-5 w-40 border-t border-l border-[#a0a0a0] bg-white px-1 outline-none" />
    <ToolButton label="Find previous"><IconFind /></ToolButton>
    <ToolButton label="Find next"><IconFind next /></ToolButton>
    <ToolButton label="Match case"><IconCase /></ToolButton>
  </div>
);

const Viewer = () => (
  <main className="flex min-w-0 flex-1 flex-col border-r border-[#66cbea] bg-[#f0f0f0]">
    <DocumentTabs />
    <Toolbar />
    <div className="flex min-h-0 flex-1 bg-[#999]">
      <div className="flex min-w-0 flex-1 justify-center pt-px">
        <div className="flex w-[475px] items-center bg-white">
          <Schematic />
        </div>
      </div>
      <div className="flex w-[15px] shrink-0 flex-col items-center overflow-hidden border-l border-[#ababab] bg-white">
        <ScrollButton to="up" />
        <div className="w-full flex-[117] border-t border-[#ababab]" />
        <div className="flex w-full flex-[57] items-center justify-center border-y border-[#ababab] bg-[#dcdcdc]">
          <Grip />
        </div>
        <div className="w-full flex-[469]" />
        <ScrollButton to="down" />
      </div>
    </div>
  </main>
);

const StatusBar = () => (
  <footer className="flex h-[25px] shrink-0 items-end justify-between border-t-2 border-b-[3px] border-t-[#e9f0f6] border-b-[#66cbea] bg-[#44678a] pr-0.5 text-[10px] leading-3">
    <span className="text-black">Version:1.0.0.52</span>
    <span className="text-white">Current [J609_Main_SCH_V1]</span>
  </footer>
);

export default function App() {
  return (
    <div className="flex h-screen flex-col overflow-hidden bg-[#f0f0f0] font-['Liberation_Mono',monospace] text-black">
      <TitleBar />
      <Banner />
      <div className="flex min-h-0 flex-1">
        <Sidebar />
        <Viewer />
      </div>
      <StatusBar />
    </div>
  );
}
